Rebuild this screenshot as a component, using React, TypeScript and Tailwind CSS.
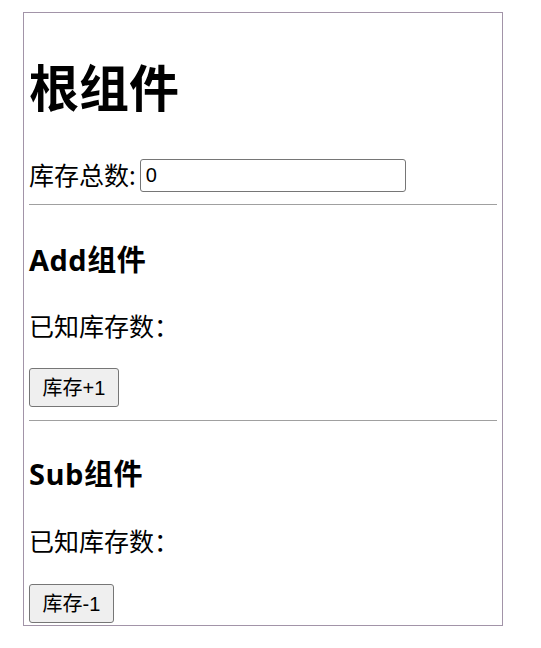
export default function App() {
    return (
        <div className="min-h-[648px] bg-white pt-[12px] pl-[23px] font-['Noto_Sans','Noto_Sans_CJK_SC',sans-serif] text-black">
            <div className="flex h-[614px] w-[480px] flex-col overflow-hidden border border-[#a294a8] px-[5px]">
                <h1 className="mt-[50px] h-[50px] text-[50px] font-bold leading-[50px]">根组件</h1>

                <div className="mt-[46px] flex h-[33px] items-center">
                    <span className="text-[25px] leading-[33px]">库存总数:</span>
                    <input
                        type="text"
                        defaultValue="0"
                        className="ml-[4px] h-[33px] w-[266px] rounded-[3px] border border-[#767676] px-[5px] font-['Liberation_Sans',sans-serif] text-[20px] outline-none"
                    />
                </div>

                <hr className="mt-[12px] border-t border-[#a0a0a0]" />

                <h3 className="mt-[38px] h-[34px] font-['Open_Sans','Noto_Sans_CJK_SC',sans-serif] text-[29px] font-bold leading-[34px] tracking-[0.5px]">
                    Add组件
                </h3>
                <p className="mt-[34px] h-[30px] text-[25px] leading-[30px]">已知库存数：</p>
                <div className="mt-[27px]">
                    <button
                        type="button"
                        className="h-[39px] w-[90px] rounded-[3px] border border-[#767676] bg-[#efefef] font-['Liberation_Sans','Noto_Sans_CJK_SC',sans-serif] text-[20px]"
                    >
                        库存+1
                    </button>
                </div>

                <hr className="mt-[13px] border-t border-[#a0a0a0]" />

                <h3 className="mt-[36px] h-[34px] font-['Open_Sans','Noto_Sans_CJK_SC',sans-serif] text-[29px] font-bold leading-[34px] tracking-[0.5px]">
                    Sub组件
                </h3>
                <p className="mt-[35px] h-[30px] text-[25px] leading-[30px]">已知库存数：</p>
                <div className="mt-[28px]">
                    <button
                        type="button"
                        className="h-[39px] w-[85px] rounded-[3px] border border-[#767676] bg-[#efefef] font-['Liberation_Sans','Noto_Sans_CJK_SC',sans-serif] text-[20px]"
                    >
                        库存-1
                    </button>
                </div>
            </div>
        </div>
    );
}
